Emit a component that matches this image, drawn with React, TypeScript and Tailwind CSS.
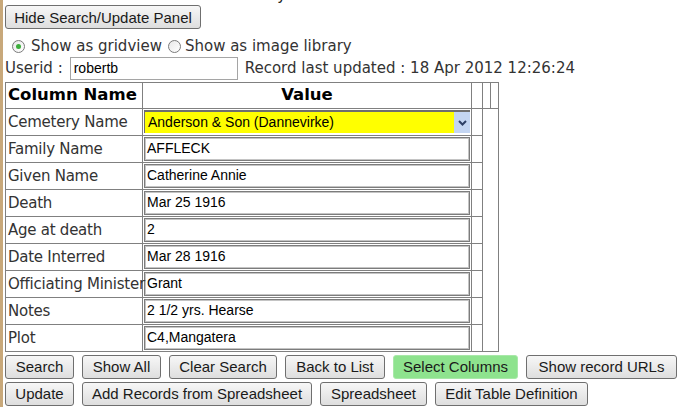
import type { FC, ReactNode } from "react";

/** 一覧の行データ。1行目(墓地名)はセレクトなので別扱い */
const RECORD_ROWS: [string, string][] = [
  ["Family Name", "AFFLECK"],
  ["Given Name", "Catherine Annie"],
  ["Death", "Mar 25 1916"],
  ["Age at death", "2"],
  ["Date Interred", "Mar 28 1916"],
  ["Officiating Minister", "Grant"],
  ["Notes", "2 1/2 yrs. Hearse"],
  ["Plot", "C4,Mangatera"],
];

const VERDANA = "font-['DejaVu_Sans',Verdana,sans-serif]";
const ARIAL = "font-['Liberation_Sans',Arial,sans-serif]";

const OldButton: FC<{ children: ReactNode; green?: boolean; className?: string }> = ({ children, green = false, className }) => (
  <button
    className={`h-[24px] shrink-0 rounded-[3px] border px-0 text-center text-[15px] leading-none whitespace-nowrap text-[#1a1a1a] ${ARIAL} ${
      green ? "border-[#a8e8a8] bg-[#8ee38e]" : "border-[#6f6f6f] bg-gradient-to-b from-[#f7f7f7] to-[#dedede]"
    } ${className ?? ""}`}
  >
    {children}
  </button>
);

const Radio: FC<{ checked?: boolean }> = ({ checked = false }) => (
  <span className="flex h-[13px] w-[13px] shrink-0 items-center justify-center rounded-full border border-[#7a7a7a] bg-gradient-to-br from-[#e8e8e8] to-white">
    {checked && <span className="h-[5px] w-[5px] rounded-full bg-[#3cae3c]" />}
  </span>
);

const TextBox: FC<{ value: string }> = ({ value }) => (
  <div
    className={`flex h-[24px] items-center border border-[#7c7c7c] bg-white px-[2px] text-[14px] text-black shadow-[inset_0_0_0_1px_#c4c4c4] ${ARIAL}`}
  >
    {value}
  </div>
);

const App: FC = () => {
  return (
    <div className="flex min-h-[407px] w-[685px] overflow-hidden bg-white">
      <div className="w-[3px] shrink-0 bg-[#c8a87a]" />
      <div className={`flex flex-1 flex-col pl-[2px] text-[15px] text-[#333] ${VERDANA}`}>
        <p className="-mt-[14px] h-[18px] leading-[18px] whitespace-nowrap text-[#222]">Dannevirke Memorial records: Woody Sandst.</p>

        <div className="pt-[1px]">
          <OldButton className="w-[196px]">Hide Search/Update Panel</OldButton>
        </div>

        <div className="mt-[8px] flex h-[18px] items-center pl-[7px] leading-[18px]">
          <Radio checked />
          <span className="ml-[6px]">Show as gridview</span>
          <span className="ml-[6px]">
            <Radio />
          </span>
          <span className="ml-[4px]">Show as image library</span>
        </div>

        <div className="mt-[2px] flex h-[23px] items-center">
          <span>Userid :</span>
          <div className={`ml-[7px] flex h-[23px] w-[168px] items-center border border-[#a5a5a5] px-[3px] text-[14px] text-black ${ARIAL}`}>
            robertb
          </div>
          <span className="ml-[7px] whitespace-nowrap">Record last updated : 18 Apr 2012 12:26:24</span>
        </div>

        <table className="mt-[2px] w-[493px] table-fixed border-collapse border border-[#808080]">
          <colgroup>
            <col className="w-[137px]" />
            <col className="w-[329px]" />
            <col className="w-[11px]" />
            <col className="w-[8px]" />
            <col className="w-[8px]" />
          </colgroup>
          <thead>
            <tr className="h-[23px]">
              <th className="border border-[#808080] px-[2px] text-left text-[16.5px] font-bold whitespace-nowrap text-black">Column Name</th>
              <th className="border border-[#808080] text-center text-[16.5px] font-bold text-black">Value</th>
              <th className="border border-[#808080]" />
              <th className="border border-[#808080]" />
              <th className="border border-[#808080]" />
            </tr>
          </thead>
          <tbody>
            <tr className="h-[27px]">
              <td className="border border-[#808080] px-[2px] pt-[1px] tracking-[-0.25px] whitespace-nowrap">Cemetery Name</td>
              <td className="border border-[#808080] p-[1px]">
                <div className={`flex h-[23px] items-stretch border-t-2 border-l border-[#6e6e6e] bg-[#ffff00] text-[14px] text-black ${ARIAL}`}>
                  <span className="flex flex-1 items-center px-[3px]">Anderson &amp; Son (Dannevirke)</span>
                  <span className="flex w-[16px] items-center justify-center bg-[#c3d5f2]">
                    <svg width="9" height="6" viewBox="0 0 9 6">
                      <path d="M1 1 L4.5 4.5 L8 1" fill="none" stroke="#2d3f66" strokeWidth="2" />
                    </svg>
                  </span>
                </div>
              </td>
              <td className="border border-[#808080]" />
              <td className="border border-[#808080]" colSpan={2} rowSpan={9} />
            </tr>
            {RECORD_ROWS.map(([label, value]) => (
              <tr key={label} className="h-[27px]">
                <td className="overflow-visible border border-[#808080] px-[2px] pt-[1px] tracking-[-0.25px] whitespace-nowrap">{label}</td>
                <td className="border border-[#808080] p-[1px]">
                  <TextBox value={value} />
                </td>
                <td className="border border-[#808080]" />
              </tr>
            ))}
          </tbody>
        </table>

        <div className="mt-[3px] flex gap-[8px]">
          <OldButton className="w-[69px]">Search</OldButton>
          <OldButton className="w-[79px]">Show All</OldButton>
          <OldButton className="w-[108px]">Clear Search</OldButton>
          <OldButton className="w-[100px]">Back to List</OldButton>
          <OldButton green className="w-[125px]">
            Select Columns
          </OldButton>
          <OldButton className="w-[151px]">Show record URLs</OldButton>
        </div>
        <div className="mt-[3px] flex gap-[8px]">
          <OldButton className="w-[69px]">Update</OldButton>
          <OldButton className="w-[230px]">Add Records from Spreadsheet</OldButton>
          <OldButton className="w-[107px]">Spreadsheet</OldButton>
          <OldButton className="w-[153px]">Edit Table Definition</OldButton>
        </div>
      </div>
    </div>
  );
};

export default App;
